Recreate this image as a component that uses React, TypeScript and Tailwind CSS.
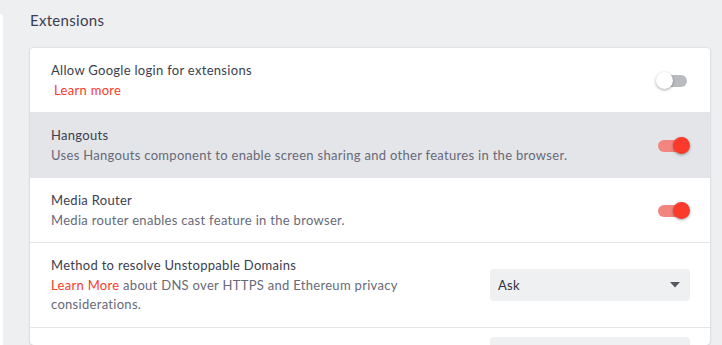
import React from "react";

function Toggle({ on }: { on: boolean }) {
  return (
    <div className="relative w-[34px] h-[17px] shrink-0">
      <div
        className={
          "absolute left-[2px] right-[3px] top-[2.5px] h-[12px] rounded-full " +
          (on ? "bg-[#f2867f]" : "bg-[#b9bbc0]")
        }
      />
      <div
        className={
          "absolute top-0 w-[17px] h-[17px] rounded-full shadow-[0_1px_3px_rgba(0,0,0,0.35)] " +
          (on ? "right-0 bg-[#fb3a2b]" : "left-0 bg-white")
        }
      />
    </div>
  );
}

function Select({ value }: { value: string }) {
  return (
    <div className="w-[200px] h-[32px] shrink-0 rounded-[4px] bg-[#eff0f2] flex items-center justify-between pl-[8px] pr-[10px] text-[13px] text-[#2f3140]">
      <span>{value}</span>
      <svg width="10" height="6" viewBox="0 0 10 6">
        <path d="M0 0 L10 0 L5 5.5 Z" fill="#55575f" />
      </svg>
    </div>
  );
}

function Row({
  children,
  control,
  hover,
  first,
}: {
  children: React.ReactNode;
  control: React.ReactNode;
  hover?: boolean;
  first?: boolean;
}) {
  return (
    <div
      className={
        "flex items-center justify-between pl-[21px] pr-[20px] pt-[13px] pb-[12px] " +
        (first ? "" : "border-t border-[#e3e4e7] ") +
        (hover ? "bg-[#e4e5e8]" : "bg-white")
      }
    >
      <div className="flex flex-col leading-[19.5px] text-[13px]">{children}</div>
      {control}
    </div>
  );
}

export default function App() {
  return (
    <div
      className="w-[722px] h-[345px] overflow-hidden bg-[#eeeff1] flex tracking-[0.3px]"
      style={{ fontFamily: "Lato, 'Noto Sans', sans-serif" }}
    >
      <div className="w-[3px] mt-[14px] bg-white rounded-tr-[4px] shrink-0" />
      <div className="flex-1 pl-[27px] pr-[12px] flex flex-col">
        <div className="pt-[10px] text-[15px] leading-[20px] text-[#3b3e4f]">Extensions</div>
        <div className="mt-[18px] bg-white rounded-[4px] shadow-[0_0_2px_rgba(0,0,0,0.18),0_1px_2px_rgba(0,0,0,0.08)] overflow-hidden">
          <Row first control={<Toggle on={false} />}>
            <span className="text-[#3b3e4f]">Allow Google login for extensions</span>
            <span className="text-[#fb3a2b] pl-[3px]">Learn more</span>
          </Row>
          <Row hover control={<Toggle on />}>
            <span className="text-[#3b3e4f]">Hangouts</span>
            <span className="text-[#676979]">
              Uses Hangouts component to enable screen sharing and other features in the browser.
            </span>
          </Row>
          <Row control={<Toggle on />}>
            <span className="text-[#3b3e4f]">Media Router</span>
            <span className="text-[#676979]">Media router enables cast feature in the browser.</span>
          </Row>
          <Row control={<Select value="Ask" />}>
            <span className="text-[#3b3e4f]">Method to resolve Unstoppable Domains</span>
            <p className="text-[#676979] w-[360px]">
              <span className="text-[#fb3a2b]">Learn More</span> about DNS over HTTPS and Ethereum privacy
              considerations.
            </p>
          </Row>
          <div className="flex items-start justify-end pl-[21px] pr-[20px] pt-[9px] pb-[12px] border-t border-[#e3e4e7]">
            <div className="w-[200px] h-[32px] shrink-0 rounded-[4px] bg-[#eff0f2]" />
          </div>
        </div>
      </div>
    </div>
  );
}
